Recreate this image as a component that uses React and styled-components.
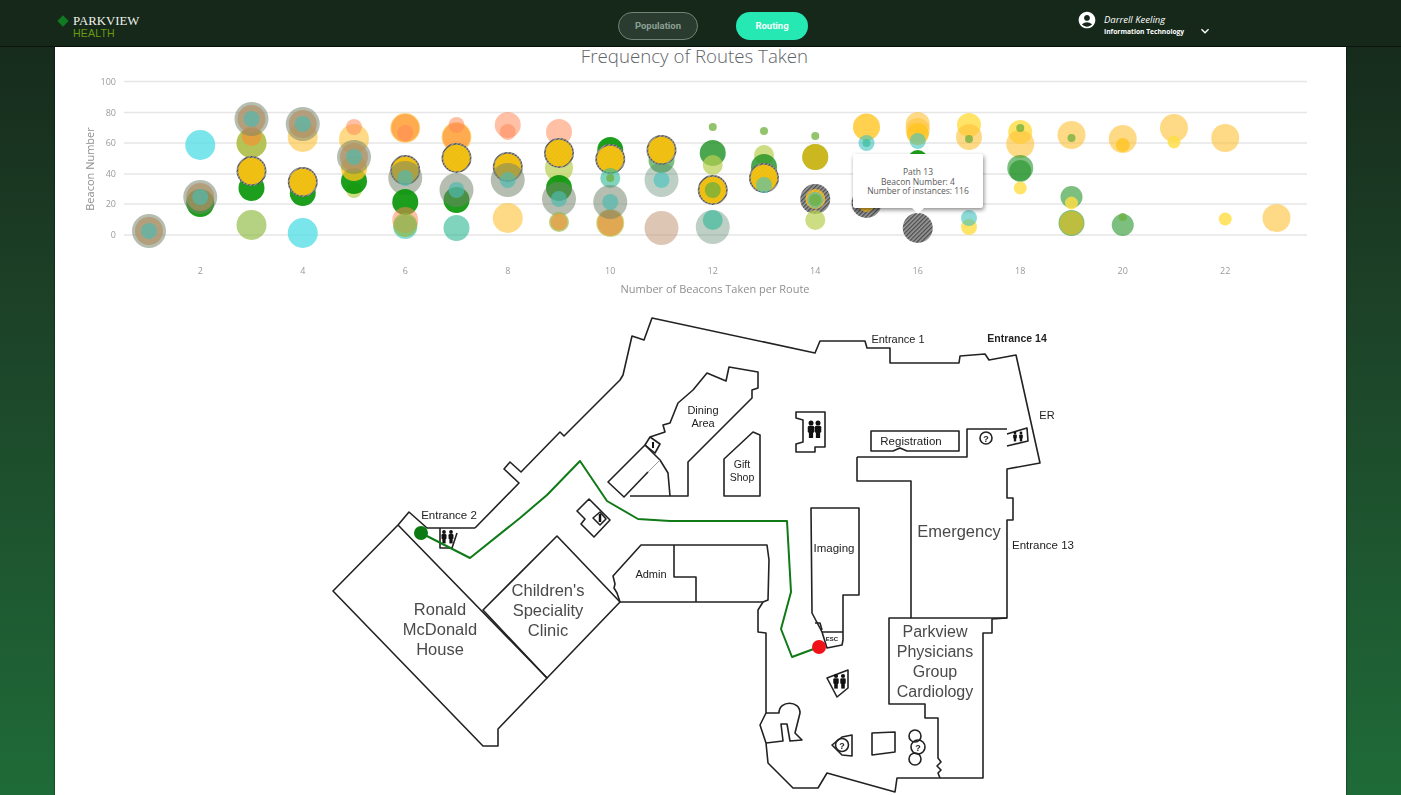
import React from "react";
import styled, { createGlobalStyle } from "styled-components";
import { MdAccountCircle, MdKeyboardArrowDown } from "react-icons/md";

const GlobalStyle = createGlobalStyle`
  html, body {
    margin: 0;
    padding: 0;
    height: 100%;
    overflow: hidden;
    font-family: "Open Sans", "Liberation Sans", sans-serif;
  }
`;

// bubble colours, alpha is what gives the overlaps
const COLORS = {
  cyan: "rgba(84,222,228,.78)",
  olive: "rgba(140,185,60,.64)",
  lime: "rgba(185,208,85,.72)",
  yellow: "rgba(255,196,60,.62)",
  amber: "rgba(255,196,30,.78)",
  sun: "rgba(255,222,70,.82)",
  mustard: "rgba(205,182,25,.92)",
  khaki: "rgba(195,190,60,.92)",
  green: "rgba(10,150,10,.92)",
  deep: "rgba(30,145,35,.8)",
  midgreen: "rgba(30,145,35,.58)",
  small: "rgba(110,175,60,.75)",
  orange: "rgba(255,140,45,.6)",
  rust: "rgba(226,165,80,.95)",
  peach: "rgba(255,135,85,.52)",
  teal: "rgba(50,185,150,.62)",
  aqua: "rgba(70,195,190,.62)",
  tan: "rgba(185,135,100,.48)",
  pale: "rgba(85,130,105,.38)",
};

const colX = (n) => 149 + (n - 1) * 51.25;

// [column, y, radius, kind], drawn in order
const BUBBLES = [
  [1, 231, 0, "stack"],
  [2, 145, 15, "cyan"], [2, 203, 14, "green"], [2, 197, 0, "stack"],
  [3, 143, 15, "yellow"], [3, 143, 15, "olive"], [3, 136, 10, "orange"], [3, 188, 13, "green"], [3, 171, 0, "gold"], [3, 225, 15, "olive"], [3, 119, 0, "stack"],
  [4, 137, 15, "yellow"], [4, 193, 13, "green"], [4, 182, 0, "gold"], [4, 233, 15, "cyan"], [4, 124, 0, "stack"],
  [5, 139, 15, "yellow"], [5, 127, 8, "peach"], [5, 190, 8, "lime"], [5, 181, 13, "green"], [5, 168, 13, "amber"], [5, 157, 0, "stack"],
  [6, 128, 15, "yellow"], [6, 128, 14, "orange"], [6, 133, 8, "peach"], [6, 170, 0, "gold"], [6, 178, 0, "stackLight"], [6, 202, 13, "green"], [6, 227, 12, "aqua"], [6, 220, 13, "peach"], [6, 225, 12, "olive"],
  [7, 137, 15, "yellow"], [7, 137, 14, "orange"], [7, 125, 8, "peach"], [7, 158, 0, "gold"], [7, 200, 13, "green"], [7, 190, 0, "stackLight"], [7, 228, 13, "teal"],
  [8, 125, 13, "peach"], [8, 132, 8, "peach"], [8, 167, 0, "gold"], [8, 180, 0, "stackLight"], [8, 218, 15, "yellow"],
  [9, 132, 13, "peach"], [9, 168, 14, "lime"], [9, 153, 0, "gold"], [9, 188, 13, "green"], [9, 199, 0, "stackLight"], [9, 222, 10, "olive"], [9, 222, 8.5, "rust"],
  [10, 150, 13, "green"], [10, 159, 0, "gold"], [10, 178, 10, "teal"], [10, 178, 4, "small"], [10, 223, 14, "lime"], [10, 223, 13, "rust"], [10, 202, 0, "stackLight"],
  [11, 160, 13, "midgreen"], [11, 150, 0, "gold"], [11, 180, 17, "pale"], [11, 180, 8, "aqua"], [11, 228, 17, "tan"],
  [12, 127, 4, "small"], [12, 153, 13, "deep"], [12, 165, 10, "lime"], [12, 190, 0, "gold"], [12, 190, 8, "small"], [12, 227, 17, "pale"], [12, 220, 10, "teal"],
  [13, 131, 4, "small"], [13, 155, 10, "lime"], [13, 167, 13, "deep"], [13, 178, 0, "gold"], [13, 185, 8, "aqua"],
  [14, 136, 4, "small"], [14, 157, 13, "olive"], [14, 157, 13, "mustard"], [14, 199, 0, "hatch"], [14, 199, 10, "amber"], [14, 200, 8, "aqua"], [14, 200, 6, "small"], [14, 220, 10, "lime"],
  [15, 127, 13.5, "amber"], [15, 143, 8, "aqua"], [15, 143, 4, "teal"], [15, 203, 0, "hatch"], [15, 204, 8, "amber"],
  [16, 130, 12, "yellow"], [16, 124, 12, "yellow"], [16, 134, 11, "amber"], [16, 141, 8, "aqua"], [16, 160, 10, "green"], [16, 228, 0, "hatch"],
  [17, 125, 12, "sun"], [17, 137, 13, "yellow"], [17, 139, 4, "small"], [17, 227, 8, "sun"], [17, 218, 8, "aqua"],
  [18, 132, 12, "sun"], [18, 144, 14, "yellow"], [18, 128, 4, "small"], [18, 168, 13, "midgreen"], [18, 171, 11, "midgreen"], [18, 188, 6.5, "sun"],
  [19, 135, 14, "yellow"], [19, 138, 4, "small"], [19, 197, 11, "midgreen"], [19, 203, 6.5, "sun"], [19, 223, 13, "midgreen"], [19, 223, 12, "khaki"],
  [20, 139, 14, "yellow"], [20, 145, 7, "amber"], [20, 225, 11, "midgreen"], [20, 217, 4, "small"],
  [21, 128, 14, "yellow"], [21, 142, 6.5, "sun"],
  [22, 138, 14, "yellow"], [22, 219, 6.5, "sun"],
  [23, 218, 14, "yellow"],
];

const Y_TICKS = [[100, 81.5], [80, 112.5], [60, 143], [40, 174], [20, 204], [0, 235]];
const X_TICKS = [2, 4, 6, 8, 10, 12, 14, 16, 18, 20, 22];

const WALLS = [
  // outer wall
  "M475 528L519 483L504 469L510 462L521 472L560 432L564 436L620 380L623 375L632 336L644 340L652 318L815 353L820 341L865 341L867 348L890 348L890 363L959 363L960 356L985 354L989 360L1016 355L1040 463L1007 469L1007 498L1013 498L1013 520L1007 520L1007 618L992 619L992 633L983 633L983 778L940 778L897 778L895 792L827 773L818 788L793 788L768 763L766 743L760 725L766 713L766 633L758 632L758 610L763 602",
  // entrance 2 + ronald mcdonald
  "M475 528L427 528L409 512L398 525L333 591L483 746L498 746L498 729L547 678L398 525",
  // childrens
  "M557 536L620 602L547 678L483 610Z",
  // admin
  "M620 602L763 602L768 600L769 560L767 545L641 545L613 576L615 584L614 588L617 593L620 602",
  "M674 545L674 577L696 577L696 602",
  // dining
  "M630 496L688 496L688 462L752 398L752 390L758 388L758 372L729 367L726 381L707 373L693 390L678 403L670 423L663 425L665 432L650 437",
  "M645 445L608 482L624 497L648 472",
  "M645 445L660 460L668 473L670 496",
  "M650 437L660 444L655 453L645 445Z",
  // gift shop
  "M724 496L724 459L753 432L760 435L760 496Z",
  // small restroom
  "M589 499L577 511L585 519L581 524L594 537L610 520Z",
  "M600 512L593 518L600 525L606 519Z",
  // restroom by entrance
  "M440 528L440 548L452 548L457 533",
  // top restroom
  "M796 412L825 412L825 447L815 447L815 452L796 452L796 444L803 442L803 420L796 418Z",
  // registration
  "M871 431L959 431L959 451L907 451L900 448L893 451L871 451Z",
  // emergency
  "M857 457L967 457L967 429L1007 429M857 457L857 481L911 481L911 618L1007 618",
  "M1007 434L1027 428L1028 441L1007 446",
  // imaging
  "M811 508L859 508L859 595L843 595L843 640L842 645L827 648L822 632L812 613Z",
  "M822 632L843 632M815 623L820 623L822 630",
  // cardiology
  "M911 618L889 618L889 704L925 704L925 718L938 718L938 758L941 762L937 766L941 770L938 773L940 778",
  // lower restroom
  "M827 678L848 670L848 688L837 697Z",
  // bottom shapes
  "M872 733L895 732L895 752L872 755Z",
  "M832 745L842 737L852 735L852 756L842 755Z",
  "M766 713L779 713C779 700 800 700 800 713L795 733L802 740L790 741L787 724L781 724L783 741L766 743",
];

const LABELS = [
  ["Entrance 1", 898, 343, 11, 400],
  ["Entrance 14", 1017, 342, 10.5, 700],
  ["ER", 1047, 419, 11, 400],
  ["Registration", 911, 445, 11.5, 400],
  ["Emergency", 959, 537, 16.5, 400],
  ["Entrance 13", 1043, 549, 11.5, 400],
  ["Imaging", 834, 552, 11.5, 400],
  ["Parkview", 935, 637, 16, 400],
  ["Physicians", 935, 657, 16, 400],
  ["Group", 935, 677, 16, 400],
  ["Cardiology", 935, 697, 16, 400],
  ["Dining", 703, 414, 11, 400],
  ["Area", 703, 427, 11, 400],
  ["Gift", 742, 468, 10.5, 400],
  ["Shop", 742, 481, 10.5, 400],
  ["Admin", 651, 578, 11, 400],
  ["Entrance 2", 449, 519, 11.5, 400],
  ["Children's", 548, 596, 16.5, 400],
  ["Speciality", 548, 616, 16.5, 400],
  ["Clinic", 548, 636, 16.5, 400],
  ["Ronald", 440, 615, 16.5, 400],
  ["McDonald", 440, 635, 16.5, 400],
  ["House", 440, 655, 16.5, 400],
  ["ESC", 832, 641, 6, 700],
];

const QUESTIONS = [[986, 438, 6], [842, 745, 6.5], [918, 747, 7]];
const RINGS = [[915, 736, 6], [915, 759, 6]];
// x, head y, scale
const PEOPLE = [
  [444, 532, 0.95], [451, 532, 0.95],
  [811, 423, 1.25], [818, 423, 1.25],
  [836, 676, 1.05], [843, 676, 1.05],
  [1015, 433, 0.7], [1021, 433, 0.7],
];

const ROUTE = "M421 533L470 558L520 518L547 495L580 461L607 501L638 519L670 521L787 521L791 592L781 629L792 657L819 647";

const Page = styled.div`
  display: flex;
  flex-direction: column;
  height: 100vh;
  background: linear-gradient(180deg, #15271a 0%, #1c3f26 35%, #1f6b38 100%);
`;

const Header = styled.header`
  flex: none;
  display: flex;
  align-items: center;
  height: 47px;
  box-sizing: border-box;
  padding-left: 57px;
  background: #15281a;
  border-bottom: 1px solid #0b140c;
`;

const Logo = styled.div`
  width: 561px;
  margin-top: 8px;
  display: flex;
  gap: 6px;
`;

const Diamond = styled.span`
  width: 8px;
  height: 8px;
  margin: 2px 0 0 2px;
  background: #0f7a22;
  transform: rotate(45deg);
`;

const LogoText = styled.div`
  display: flex;
  flex-direction: column;
`;

const LogoName = styled.span`
  font: 12.8px/13px "Liberation Serif", serif;
  color: #f2f2ee;
`;

const LogoSub = styled.span`
  font: 10.5px/11px "Liberation Sans", sans-serif;
  color: #6c9a12;
  letter-spacing: 0.2px;
`;

const Nav = styled.nav`
  display: flex;
  gap: 38px;
  margin-top: 6px;
`;

const Pill = styled.div`
  display: flex;
  align-items: center;
  justify-content: center;
  box-sizing: border-box;
  height: 28px;
  padding-bottom: 1px;
  width: ${(p) => (p.$active ? 72 : 80)}px;
  border-radius: 14px;
  font: 700 9.5px Roboto, sans-serif;
  color: ${(p) => (p.$active ? "#f4fffb" : "#8aa093")};
  background: ${(p) => (p.$active ? "#25e8b2" : "#2a3b30")};
  border: ${(p) => (p.$active ? "none" : "1.5px solid #6f8377")};
`;

const User = styled.div`
  margin-left: 269px;
  display: flex;
  align-items: flex-start;
  color: #fff;
  margin-top: 3px;
`;

const UserText = styled.div`
  display: flex;
  flex-direction: column;
  margin: 3px 0 0 7px;
  width: 93px;
`;

const UserName = styled.span`
  font: italic 400 9.5px/13px "Open Sans", sans-serif;
`;

const UserDept = styled.span`
  font: 700 6.7px/11px "Open Sans", sans-serif;
`;

const Chevron = styled(MdKeyboardArrowDown)`
  font-size: 16px;
  margin-top: 13px;
`;

const Panel = styled.main`
  flex: 1;
  min-height: 0;
  margin: 0 55px;
  background: #fff;
  box-shadow: 0 0 1.5px #000;
`;

const ChartTitle = styled.h1`
  margin: 0;
  height: 20px;
  padding-right: 12px;
  font: 300 18.7px/18px "Open Sans", sans-serif;
  color: #5f6468;
  text-align: center;
`;

const ChartArea = styled.section`
  position: relative;
  height: 233px;
`;

const Drawing = styled.svg`
  display: block;
  filter: blur(0.35px);
`;

const TickLabel = styled.text`
  font: 9px "Open Sans", sans-serif;
  fill: #9a9a9a;
`;

const AxisTitle = styled.text`
  font: 11px "Open Sans", sans-serif;
  fill: #8f8f8f;
`;

const Tooltip = styled.div`
  position: absolute;
  left: 798px;
  top: 87px;
  width: 130px;
  height: 54px;
  box-sizing: border-box;
  padding-top: 13px;
  background: #fff;
  border-radius: 2px;
  box-shadow: 1px 2px 4px rgba(0, 0, 0, 0.45);
  font: 8.5px/9.5px "Open Sans", sans-serif;
  color: #5a5a5a;
  text-align: center;
  &::after {
    content: "";
    position: absolute;
    left: 59px;
    bottom: -6px;
    width: 12px;
    height: 12px;
    background: #fff;
    transform: rotate(45deg) scale(0.7);
  }
`;

const MapArea = styled.section`
  height: 495px;
`;

const MapLabel = styled.text`
  font-family: "Liberation Sans", sans-serif;
  font-size: ${(p) => p.$size}px;
  font-weight: ${(p) => p.$weight};
  fill: ${(p) => (p.$size > 14 ? "#4a4a4a" : "#222")};
  text-anchor: middle;
`;

const Bubble = ({ x, y, r, kind }) => {
  if (kind === "stack" || kind === "stackLight") {
    return (
      <g>
        <circle cx={x} cy={y} r={17} fill="rgba(115,130,105,.52)" />
        {kind === "stack" && <circle cx={x} cy={y} r={14} fill="rgba(180,145,100,.68)" />}
        <circle cx={x} cy={y} r={8} fill="rgba(80,185,175,.68)" />
      </g>
    );
  }
  if (kind === "gold" || kind === "hatch") {
    return (
      <g>
        <circle cx={x} cy={y} r={15} fill="url(#hatch)" />
        {kind === "gold" && <circle cx={x} cy={y} r={13.3} fill="#f6c40e" fillOpacity=".94" />}
      </g>
    );
  }
  return <circle cx={x} cy={y} r={r} fill={COLORS[kind]} />;
};

const Person = ({ x, y, s }) => (
  <g fill="#111" transform={`translate(${x} ${y}) scale(${s})`}>
    <circle r={2} />
    <rect x={-2.6} y={2.2} width={5.2} height={5.5} rx={1.2} />
    <rect x={-1.7} y={7} width={3.4} height={5} />
  </g>
);

const BubbleChart = () => (
  <ChartArea>
    <Drawing width="1291" height="233" viewBox="55 67 1291 233">
      <defs>
        <pattern id="hatch" width="3" height="3" patternUnits="userSpaceOnUse" patternTransform="rotate(-45)">
          <rect width="3" height="3" fill="#9a9a9a" />
          <rect width="3" height="1.3" fill="#4a4a4a" />
        </pattern>
      </defs>
      {Y_TICKS.map(([label, y]) => (
        <g key={label}>
          <line x1="124" x2="1307" y1={y} y2={y} stroke="#e6e6e6" strokeWidth="1.4" />
          <TickLabel x="116" y={y + 3} textAnchor="end">{label}</TickLabel>
        </g>
      ))}
      {X_TICKS.map((n) => (
        <TickLabel key={n} x={colX(n)} y="274" textAnchor="middle">{n}</TickLabel>
      ))}
      <AxisTitle transform="translate(94 169) rotate(-90)" textAnchor="middle">Beacon Number</AxisTitle>
      <AxisTitle x="715" y="293" textAnchor="middle">Number of Beacons Taken per Route</AxisTitle>
      {BUBBLES.map(([col, y, r, kind], i) => (
        <Bubble key={i} x={colX(col)} y={y} r={r} kind={kind} />
      ))}
    </Drawing>
    <Tooltip>
      Path 13
      <br />
      Beacon Number: 4
      <br />
      Number of instances: 116
    </Tooltip>
  </ChartArea>
);

const FloorPlan = () => (
  <MapArea>
    <Drawing width="1291" height="495" viewBox="55 300 1291 495">
      <g fill="none" stroke="#222" strokeWidth="1.6" strokeLinejoin="round">
        {WALLS.map((d) => (
          <path key={d} d={d} />
        ))}
        <path d="M648 472L660 460" stroke="#999" strokeWidth="1" />
        {RINGS.map(([x, y, r]) => (
          <circle key={y} cx={x} cy={y} r={r} />
        ))}
        {QUESTIONS.map(([x, y, r]) => (
          <circle key={x} cx={x} cy={y} r={r} />
        ))}
      </g>
      {QUESTIONS.map(([x, y]) => (
        <MapLabel key={x} x={x} y={y + 3.5} $size={9} $weight={700}>?</MapLabel>
      ))}
      {PEOPLE.map(([x, y, s]) => (
        <Person key={`${x}-${y}`} x={x} y={y} s={s} />
      ))}
      <path d="M600 514l0 8" stroke="#111" strokeWidth="2.5" />
      <path d="M653 442l0 6" stroke="#111" strokeWidth="2" />
      {LABELS.map(([text, x, y, size, weight]) => (
        <MapLabel key={text} x={x} y={y} $size={size} $weight={weight}>{text}</MapLabel>
      ))}
      <path d={ROUTE} fill="none" stroke="#0f7a16" strokeWidth="2" strokeLinejoin="round" />
      <circle cx="421" cy="533" r="7" fill="#0c7a14" />
      <circle cx="819" cy="647" r="7" fill="#f01218" />
    </Drawing>
  </MapArea>
);

export default function App() {
  return (
    <>
      <GlobalStyle />
      <Page>
        <Header>
          <Logo>
            <Diamond />
            <LogoText>
              <LogoName>PARKVIEW</LogoName>
              <LogoSub>HEALTH</LogoSub>
            </LogoText>
          </Logo>
          <Nav>
            <Pill>Population</Pill>
            <Pill $active>Routing</Pill>
          </Nav>
          <User>
            <MdAccountCircle size={20} />
            <UserText>
              <UserName>Darrell Keeling</UserName>
              <UserDept>Information Technology</UserDept>
            </UserText>
            <Chevron />
          </User>
        </Header>
        <Panel>
          <ChartTitle>Frequency of Routes Taken</ChartTitle>
          <BubbleChart />
          <FloorPlan />
        </Panel>
      </Page>
    </>
  );
}
